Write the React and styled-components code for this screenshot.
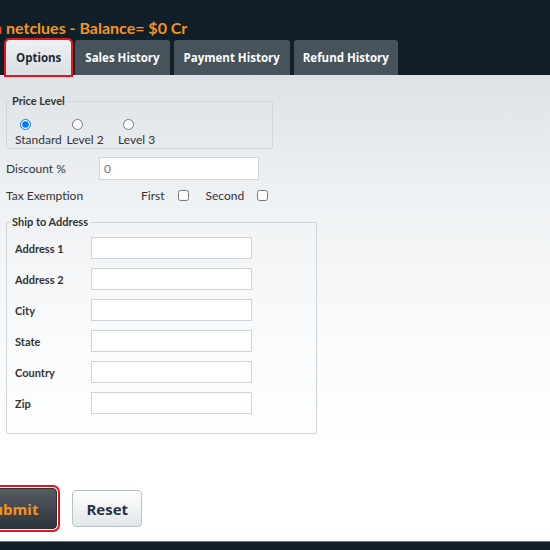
import React from 'react';
import styled, { createGlobalStyle } from 'styled-components';

const GlobalStyle = createGlobalStyle`
  html, body {
    margin: 0;
    padding: 0;
    width: 550px;
    height: 550px;
    overflow: hidden;
    font-family: Lato, "Open Sans", "Liberation Sans", sans-serif;
  }
`;

const Page = styled.div`
  width: 550px;
  height: 550px;
  display: flex;
  flex-direction: column;
  overflow: hidden;
`;

const Header = styled.header`
  background: #111f29;
  height: 75px;
  padding-top: 17px;
  box-sizing: border-box;
  display: flex;
  flex-direction: column;
`;

const Title = styled.h1`
  margin: 0 0 0 -6px;
  font-size: 16px;
  line-height: 22px;
  font-weight: 700;
  color: #f7931e;
  white-space: nowrap;
  span {
    color: #e2462b;
  }
`;

const Tabs = styled.nav`
  display: flex;
  gap: 4px;
  margin-top: 1px;
  padding-left: 6px;
`;

const Tab = styled.div`
  height: 35px;
  line-height: 35px;
  padding: 0 ${(p) => p.$pad}px;
  font-family: "Open Sans", sans-serif;
  font-size: 11.5px;
  font-weight: 700;
  border-radius: 3px 3px 0 0;
  color: ${(p) => (p.$active ? '#1d2a33' : '#ffffff')};
  background: ${(p) => (p.$active
    ? 'linear-gradient(#eef1f3, #d9dfe3)'
    : '#47535b')};
  outline: ${(p) => (p.$active ? '2px solid #e3141b' : 'none')};
  box-shadow: ${(p) => (p.$active ? '0 1px 2px rgba(0,0,0,.4)' : 'none')};
  position: relative;
  z-index: ${(p) => (p.$active ? 1 : 0)};
`;

const Content = styled.main`
  flex: 1;
  background: linear-gradient(#dde2e6 0%, #eef1f3 25%, #f9fafb 55%, #ffffff 80%);
  padding: 19px 0 0 6px;
  display: flex;
  flex-direction: column;
  color: #333;
`;

const Fieldset = styled.fieldset`
  margin: ${(p) => p.$top || 0}px 0 0 0;
  width: ${(p) => p.$width}px;
  box-sizing: border-box;
  border: 1px solid #cfd5d9;
  border-radius: 2px;
  padding: ${(p) => p.$padding};
  min-width: 0;
`;

const Legend = styled.legend`
  font-size: 11px;
  font-weight: 700;
  color: #333;
  padding: 0 2px;
  margin-left: -5px;
  line-height: 14px;
`;

const RadioRow = styled.div`
  display: flex;
`;

const RadioItem = styled.label`
  width: 51.5px;
  display: flex;
  flex-direction: column;
  align-items: flex-start;
  font-size: 12px;
  line-height: 14px;
  color: #333;
  input {
    width: 11px;
    height: 11px;
    margin: 0 0 3px 5px;
  }
`;

const Row = styled.div`
  display: flex;
  align-items: center;
  font-size: 12px;
  margin-top: ${(p) => p.$top}px;
`;

const RowLabel = styled.span`
  width: ${(p) => p.$width}px;
  font-weight: ${(p) => (p.$bold ? 700 : 400)};
  font-size: ${(p) => (p.$bold ? 11 : 12)}px;
  color: #333;
`;

const TextInput = styled.input`
  width: ${(p) => p.$width}px;
  height: ${(p) => p.$height}px;
  box-sizing: border-box;
  border: 1px solid #cfd4d8;
  background: #fff;
  padding: 0 4px;
  font-family: inherit;
  font-size: 12px;
  color: #999;
  margin: 0;
`;

const Check = styled.input`
  width: 11px;
  height: 11px;
  margin: 0 ${(p) => p.$after}px 0 0;
`;

const CheckText = styled.span`
  margin-right: ${(p) => p.$gap}px;
`;

const AddressRow = styled.div`
  display: flex;
  align-items: center;
  margin-bottom: 9px;
`;

const Buttons = styled.div`
  display: flex;
  align-items: center;
  gap: 15px;
  margin: 54px 0 0 -40px;
`;

const Button = styled.button`
  font-family: "Open Sans", sans-serif;
  font-size: 15px;
  font-weight: 700;
  cursor: pointer;
  border-radius: 4px;
  height: ${(p) => (p.$primary ? 41 : 37)}px;
  padding: 0 ${(p) => (p.$primary ? 18 : 13)}px;
  color: ${(p) => (p.$primary ? '#f7931e' : '#26333d')};
  background: ${(p) => (p.$primary
    ? 'linear-gradient(#555d63, #2c3339)'
    : 'linear-gradient(#ffffff, #e1e6e9)')};
  border: 1px solid ${(p) => (p.$primary ? '#2a3036' : '#b8c1c7')};
  outline: ${(p) => (p.$primary ? '2px solid #e3141b' : 'none')};
  outline-offset: 1px;
`;

const Footer = styled.footer`
  height: 8px;
  background: #111f29;
  border-top: 1px solid #6d7882;
`;

const addressFields = ['Address 1', 'Address 2', 'City', 'State', 'Country', 'Zip'];

export default function App() {
  return (
    <>
      <GlobalStyle />
      <Page>
        <Header>
          <Title>
            <span>a</span>
            {' netclues - Balance= $0 Cr'}
          </Title>
          <Tabs>
            <Tab $active $pad={10}>Options</Tab>
            <Tab $pad={10}>Sales History</Tab>
            <Tab $pad={10}>Payment History</Tab>
            <Tab $pad={9}>Refund History</Tab>
          </Tabs>
        </Header>
        <Content>
          <Fieldset $width={267} $padding="11px 8px 1px 8px">
            <Legend>Price Level</Legend>
            <RadioRow>
              <RadioItem>
                <input type="radio" name="level" defaultChecked />
                Standard
              </RadioItem>
              <RadioItem>
                <input type="radio" name="level" />
                Level 2
              </RadioItem>
              <RadioItem>
                <input type="radio" name="level" />
                Level 3
              </RadioItem>
            </RadioRow>
          </Fieldset>
          <Row $top={8}>
            <RowLabel $width={93}>Discount %</RowLabel>
            <TextInput $width={160} $height={23} placeholder="0" />
          </Row>
          <Row $top={8}>
            <RowLabel $width={135}>Tax Exemption</RowLabel>
            <CheckText $gap={14}>First</CheckText>
            <Check type="checkbox" $after={16} />
            <CheckText $gap={13}>Second</CheckText>
            <Check type="checkbox" $after={0} />
          </Row>
          <Fieldset $width={311} $padding="8px 8px 10px 8px" $top={12}>
            <Legend>Ship to Address</Legend>
            {addressFields.map((f) => (
              <AddressRow key={f}>
                <RowLabel $bold $width={76}>{f}</RowLabel>
                <TextInput $width={161} $height={22} />
              </AddressRow>
            ))}
          </Fieldset>
          <Buttons>
            <Button type="button" $primary>Submit</Button>
            <Button type="button">Reset</Button>
          </Buttons>
        </Content>
        <Footer />
      </Page>
    </>
  );
}
